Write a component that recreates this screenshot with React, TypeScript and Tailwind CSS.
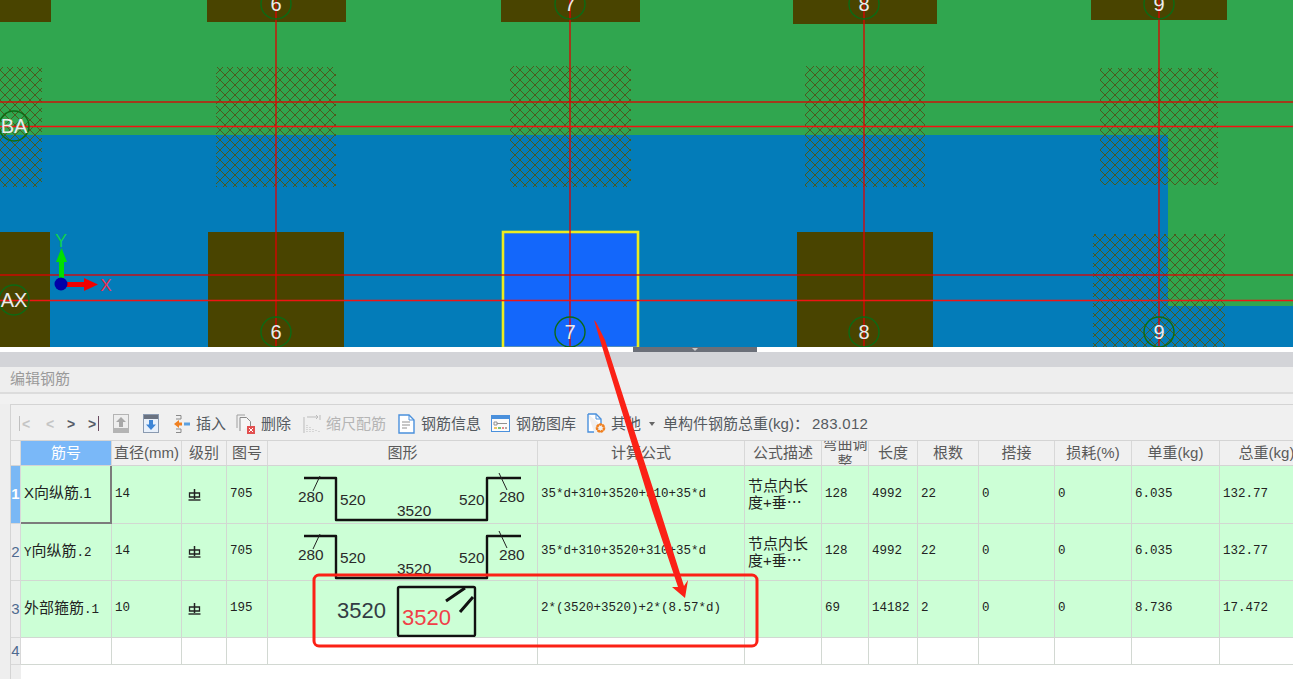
import { ReactNode } from "react";

const CJK = "font-['Liberation_Sans','Noto_Sans_CJK_SC',sans-serif]";
const MONO = "font-['Liberation_Mono','Noto_Sans_CJK_SC',monospace]";

const GRID_COLS =
  "grid grid-cols-[10px_91px_70px_45px_41px_270px_207px_77px_47px_49px_61px_76px_77px_88px_94px]";

const headers = [
  "筋号",
  "直径(mm)",
  "级别",
  "图号",
  "图形",
  "计算公式",
  "公式描述",
  "弯曲调整",
  "长度",
  "根数",
  "搭接",
  "损耗(%)",
  "单重(kg)",
  "总重(kg)",
];

function Hatch({ x, y, w, h }: { x: number; y: number; w: number; h: number }) {
  return <rect x={x} y={y} width={w} height={h} fill="url(#hatch)" />;
}

function AxisBubble({ x, y, label }: { x: number; y: number; label: string }) {
  return (
    <g>
      <circle cx={x} cy={y} r={15} fill="none" stroke="#0c6a14" strokeWidth={1.4} />
      <text
        x={x}
        y={y + 7}
        textAnchor="middle"
        fontSize={20}
        fill="#ececec"
        fontFamily="Liberation Sans, sans-serif"
      >
        {label}
      </text>
    </g>
  );
}

function PlanView() {
  const olive = "#494400";
  return (
    <svg className="block w-full h-[347px]" viewBox="0 0 1293 347">
      <defs>
        <pattern id="hatch" width="10" height="10" patternUnits="userSpaceOnUse">
          <path d="M0 0L10 10M10 0L0 10" stroke="#4c5a1e" strokeWidth="1" fill="none" />
        </pattern>
      </defs>
      <rect width="1293" height="347" fill="#30a64f" />
      <rect y="135" width="1168" height="212" fill="#037cb9" />
      <rect x="1168" y="306" width="125" height="41" fill="#037cb9" />

      <rect x="0" y="0" width="51" height="22" fill={olive} />
      <rect x="207" y="0" width="139" height="22" fill={olive} />
      <rect x="501" y="0" width="139" height="22" fill={olive} />
      <rect x="793" y="0" width="144" height="24" fill={olive} />
      <rect x="1091" y="0" width="136" height="20" fill={olive} />

      <Hatch x={0} y={67} w={42} h={120} />
      <Hatch x={216} y={67} w={120} h={120} />
      <Hatch x={510} y={66} w={121} h={121} />
      <Hatch x={805} y={66} w={120} h={121} />
      <Hatch x={1100} y={68} w={118} h={117} />
      <Hatch x={1093} y={234} w={132} h={113} />

      <rect x="0" y="232" width="50" height="115" fill={olive} />
      <rect x="208" y="232" width="136" height="115" fill={olive} />
      <rect x="797" y="232" width="136" height="115" fill={olive} />
      <rect x="503" y="232" width="135" height="116" fill="#1367fb" stroke="#ecec20" strokeWidth="2.6" />

      <g stroke="#e00000" strokeOpacity="0.65" strokeWidth="2">
        <line x1="276" y1="0" x2="276" y2="347" />
        <line x1="570" y1="0" x2="570" y2="347" />
        <line x1="864" y1="0" x2="864" y2="347" />
        <line x1="1159" y1="0" x2="1159" y2="347" />
        <line x1="0" y1="102" x2="1293" y2="102" />
        <line x1="0" y1="275" x2="1293" y2="275" />
      </g>
      <line x1="0" y1="126.5" x2="1293" y2="126.5" stroke="#f41010" strokeWidth="1.5" />
      <line x1="0" y1="300.5" x2="1293" y2="300.5" stroke="#ee1414" strokeWidth="1.5" />

      <AxisBubble x={276} y={4} label="6" />
      <AxisBubble x={570} y={4} label="7" />
      <AxisBubble x={864} y={4} label="8" />
      <AxisBubble x={1159} y={4} label="9" />
      <AxisBubble x={276} y={332} label="6" />
      <AxisBubble x={570} y={332} label="7" />
      <AxisBubble x={864} y={332} label="8" />
      <AxisBubble x={1159} y={332} label="9" />
      <AxisBubble x={14} y={126} label="BA" />
      <AxisBubble x={14} y={300} label="AX" />

      <rect x="59" y="262" width="5" height="20" fill="#00e000" />
      <path d="M61.5 248L67 262H56Z" fill="#00e000" />
      <rect x="64" y="282" width="21" height="5" fill="#f00000" />
      <path d="M84 278L98 284.5L84 291Z" fill="#f00000" />
      <circle cx="61" cy="284" r="6.5" fill="#0000a8" />
      <text x="61" y="247" textAnchor="middle" fontSize="18" fill="#10d050" fontFamily="Liberation Sans, sans-serif">
        Y
      </text>
      <text x="106" y="291" textAnchor="middle" fontSize="17" fill="#ee3050" fontFamily="Liberation Sans, sans-serif">
        X
      </text>
    </svg>
  );
}

function UpIcon() {
  return (
    <svg width="16" height="19" viewBox="0 0 16 19">
      <rect x="0.5" y="0.5" width="15" height="18" fill="#eeeeee" stroke="#b4b4b4" />
      <rect x="1" y="14" width="14" height="4" fill="#b4b4b4" />
      <path d="M8 3L13 8H10V13H6V8H3Z" fill="#a8a8a8" />
    </svg>
  );
}

function DownIcon() {
  return (
    <svg width="16" height="19" viewBox="0 0 16 19">
      <rect x="0.5" y="0.5" width="15" height="18" fill="#e8f0fa" stroke="#8a9ab0" />
      <rect x="1" y="1" width="14" height="4" fill="#6a7280" />
      <path d="M8 16L13 10.5H10V6H6V10.5H3Z" fill="#3d85d6" />
    </svg>
  );
}

function InsertIcon() {
  return (
    <svg width="18" height="20" viewBox="0 0 18 20" fill="none">
      <path d="M3 1.5H8V5H3M3 15H8V18.5H3" stroke="#8a8a8a" />
      <path d="M1 10L6 6V8.5H9V11.5H6V14Z" fill="#f08020" />
      <rect x="11" y="8.5" width="6" height="3" fill="#5aa0e0" />
    </svg>
  );
}

function DeleteIcon() {
  return (
    <svg width="20" height="20" viewBox="0 0 20 20" fill="none">
      <path d="M1 14V1H9" stroke="#a0a0a0" />
      <path d="M4 17V3.5H10.5L14.5 7.5V12" stroke="#8a8a8a" fill="#f6f6f6" />
      <rect x="11" y="12" width="8" height="8" fill="#e25050" />
      <path d="M13 14L17 18M17 14L13 18" stroke="#fff" />
    </svg>
  );
}

function ShrinkIcon() {
  return (
    <svg width="18" height="20" viewBox="0 0 18 20" fill="none" stroke="#bbbbbb">
      <path d="M1 3V19" />
      <path d="M4 3H14M13 1L15 3L13 5" />
      <path d="M17 1V6" />
      <path d="M4 11V18M7 13V18M10 15V18M13 16V18M16 17V18" strokeDasharray="1 1" />
    </svg>
  );
}

function InfoIcon() {
  return (
    <svg width="17" height="20" viewBox="0 0 17 20" fill="none">
      <path d="M1 1H11L16 6V19H1Z" fill="#fff" stroke="#4a90dc" strokeWidth="1.4" />
      <path d="M11 1V6H16" stroke="#4a90dc" />
      <path d="M4 8H12M4 11H12M4 14H9" stroke="#909090" />
    </svg>
  );
}

function LibraryIcon() {
  return (
    <svg width="19" height="17" viewBox="0 0 19 17" fill="none">
      <rect x="0.5" y="0.5" width="18" height="16" fill="#fbfbfb" stroke="#4a90dc" />
      <rect x="1" y="1" width="17" height="3" fill="#4a90dc" />
      <path d="M3 7H6V10H3ZM6 8.5H16" stroke="#909090" />
      <path d="M3 13H6" stroke="#e8b030" strokeWidth="1.5" />
      <path d="M7 13H10" stroke="#50b050" strokeWidth="1.5" />
      <path d="M11 13H13" stroke="#e06060" strokeWidth="1.5" />
      <path d="M14 13H16" stroke="#909090" strokeWidth="1.5" />
    </svg>
  );
}

function OtherIcon() {
  return (
    <svg width="20" height="21" viewBox="0 0 20 21" fill="none">
      <path d="M1 1H9L14 6V12M7 19H1V1" fill="#fff" stroke="#4a90dc" strokeWidth="1.4" />
      <path d="M9 1V6H14" stroke="#4a90dc" />
      <circle cx="13.5" cy="15" r="3.5" stroke="#f08020" strokeWidth="2.6" strokeDasharray="2.2 0.8" />
      <circle cx="13.5" cy="15" r="3.6" stroke="#f08020" strokeWidth="1.2" />
    </svg>
  );
}

function ToolItem({
  icon,
  label,
  gap,
  muted,
}: {
  icon: ReactNode;
  label: string;
  gap: string;
  muted?: boolean;
}) {
  return (
    <div className={`flex items-center ${gap}`}>
      {icon}
      <span className={muted ? "text-[#b5b5b5]" : "text-[#555a60]"}>{label}</span>
    </div>
  );
}

function Toolbar() {
  return (
    <div className={`flex items-center h-[35px] pt-[2px] text-[15px] leading-none ${CJK}`}>
      <div className="flex items-center w-[102px] pl-[8px] text-[14px] font-bold">
        <span className="w-[1px] h-[15px] bg-[#c0c0c0] mr-[2px]" />
        <span className="w-[24px] text-[#c4c4c4]">&lt;</span>
        <span className="w-[21px] text-[#c4c4c4]">&lt;</span>
        <span className="w-[21px] text-[#555a66]">&gt;</span>
        <span className="w-[10px] text-[#555a66]">&gt;</span>
        <span className="w-[1px] h-[15px] bg-[#6a4a60]" />
      </div>
      <UpIcon />
      <div className="w-[14px]" />
      <DownIcon />
      <div className="w-[14px]" />
      <ToolItem icon={<InsertIcon />} label="插入" gap="gap-[5px]" />
      <div className="w-[10px]" />
      <ToolItem icon={<DeleteIcon />} label="删除" gap="gap-[5px]" />
      <div className="w-[12px]" />
      <ToolItem icon={<ShrinkIcon />} label="缩尺配筋" gap="gap-[5px]" muted />
      <div className="w-[12px]" />
      <ToolItem icon={<InfoIcon />} label="钢筋信息" gap="gap-[6px]" />
      <div className="w-[10px]" />
      <ToolItem icon={<LibraryIcon />} label="钢筋图库" gap="gap-[6px]" />
      <div className="w-[11px]" />
      <ToolItem icon={<OtherIcon />} label="其他" gap="gap-[4px]" />
      <span className="ml-[8px] w-0 h-0 border-x-[3px] border-x-transparent border-t-[4px] border-t-[#666]" />
      <span className="ml-[8px] text-[#555a60] whitespace-nowrap">
        单构件钢筋总重(kg)：<span className="ml-[3px] tracking-[0.3px]">283.012</span>
      </span>
    </div>
  );
}

function BentShape() {
  const font = "Liberation Sans, sans-serif";
  return (
    <svg className="block" width="270" height="56" viewBox="1 0 270 56" overflow="visible">
      <path d="M37 12H69V54H220V12H254" fill="none" stroke="#111" strokeWidth="2.4" strokeLinejoin="round" />
      <path d="M53 10L46 25M232 7L240 24" stroke="#222" fill="none" />
      <g fontSize="15.4" fill="#2a2a2a" fontFamily={font}>
        <text x="31" y="36">280</text>
        <text x="73" y="39">520</text>
        <text x="130" y="50">3520</text>
        <text x="192" y="39">520</text>
        <text x="232" y="36">280</text>
      </g>
    </svg>
  );
}

function HoopShape() {
  const font = "Liberation Sans, sans-serif";
  return (
    <svg className="block" width="270" height="56" viewBox="1 0 270 56">
      <rect x="131" y="6" width="77" height="49" rx="1.5" fill="none" stroke="#111" strokeWidth="2.4" />
      <path d="M179 20L198 7M193 31L206 16" stroke="#111" strokeWidth="3" fill="none" />
      <text x="70" y="37" fontSize="22" fill="#333b44" fontFamily={font}>3520</text>
      <text x="135" y="44" fontSize="22" fill="#f04048" fontFamily={font}>3520</text>
    </svg>
  );
}

function GradeMark() {
  return (
    <svg width="13" height="13" viewBox="0 0 13 13" fill="none" stroke="#222" role="img" aria-label="钢筋级别">
      <path d="M6.5 1V11" strokeWidth="1.5" />
      <path d="M1.5 9V5H11.5V9H1.5Z" strokeWidth="1.3" />
      <path d="M0.5 12H12.5" strokeWidth="1.4" />
    </svg>
  );
}

function Cell({
  children,
  selected,
  green = true,
}: {
  children?: ReactNode;
  selected?: boolean;
  green?: boolean;
}) {
  return (
    <div
      className={`flex items-center min-w-0 pl-[3px] pb-[1px] overflow-hidden whitespace-nowrap ${
        green ? "bg-[#ccffd6]" : "bg-white"
      } ${
        selected
          ? "border-r-2 border-b-2 border-r-[#7c7c7c] border-b-[#7c7c7c]"
          : "border-r border-b border-[#d2d8d2]"
      }`}
    >
      {children}
    </div>
  );
}

function RowNo({ n, active }: { n: number; active?: boolean }) {
  return (
    <div
      className={`flex items-center justify-center text-[15px] border-r border-b border-[#d8d8d8] ${CJK} ${
        active ? "bg-[#7ab8f5] text-white font-bold" : "bg-[#eeeeee] text-[#4f6a90]"
      }`}
    >
      {n}
    </div>
  );
}

const rows = [
  {
    h: "h-[58px]",
    name: (
      <span className={`text-[15px] text-[#222] ${CJK}`}>X向纵筋.1</span>
    ),
    dia: "14",
    fig: "705",
    shape: <BentShape />,
    formula: "35*d+310+3520+310+35*d",
    desc: true,
    bend: "128",
    len: "4992",
    num: "22",
    unit: "6.035",
    total: "132.77",
  },
  {
    h: "h-[57px]",
    name: (
      <span>
        Y<span className={`text-[15px] ${CJK}`}>向纵筋</span>.2
      </span>
    ),
    dia: "14",
    fig: "705",
    shape: <BentShape />,
    formula: "35*d+310+3520+310+35*d",
    desc: true,
    bend: "128",
    len: "4992",
    num: "22",
    unit: "6.035",
    total: "132.77",
  },
  {
    h: "h-[57px]",
    name: (
      <span>
        <span className={`text-[15px] ${CJK}`}>外部箍筋</span>.1
      </span>
    ),
    dia: "10",
    fig: "195",
    shape: <HoopShape />,
    formula: "2*(3520+3520)+2*(8.57*d)",
    desc: false,
    bend: "69",
    len: "14182",
    num: "2",
    unit: "8.736",
    total: "17.472",
  },
];

function RebarTable() {
  return (
    <div className={`text-[12.5px] text-[#222] ${MONO}`}>
      <div className={`${GRID_COLS} h-[26px] border-y border-[#d4d4d4]`}>
        <div className="bg-[#f0f0f0] border-r border-[#d8d8d8]" />
        {headers.map((title, i) => (
          <div
            key={title}
            className={`flex items-center justify-center overflow-hidden border-r border-[#d8d8d8] text-[15px] leading-[18px] text-center ${CJK} ${
              i === 0 ? "bg-[#7ab8f8] text-white" : "bg-[#f0f0f0] text-[#5a5a5a]"
            } ${title === "弯曲调整" ? "whitespace-normal" : "whitespace-nowrap"}`}
          >
            {title}
          </div>
        ))}
      </div>
      {rows.map((row, i) => (
        <div key={i} className={`${GRID_COLS} ${row.h}`}>
          <RowNo n={i + 1} active={i === 0} />
          <Cell selected={i === 0}>{row.name}</Cell>
          <Cell>{row.dia}</Cell>
          <Cell>
            <span className="ml-[3px]">
              <GradeMark />
            </span>
          </Cell>
          <Cell>{row.fig}</Cell>
          <div className="border-r border-b border-[#d2d8d2] bg-[#ccffd6]">{row.shape}</div>
          <Cell>{row.formula}</Cell>
          <Cell>
            {row.desc && (
              <span className={`text-[15px] leading-[17px] ${CJK}`}>
                节点内长
                <br />
                度+垂⋯
              </span>
            )}
          </Cell>
          <Cell>{row.bend}</Cell>
          <Cell>{row.len}</Cell>
          <Cell>{row.num}</Cell>
          <Cell>0</Cell>
          <Cell>0</Cell>
          <Cell>{row.unit}</Cell>
          <Cell>{row.total}</Cell>
        </div>
      ))}
      <div className={`${GRID_COLS} h-[27px]`}>
        <RowNo n={4} />
        {headers.map((title) => (
          <Cell key={title} green={false} />
        ))}
      </div>
    </div>
  );
}

function Annotations() {
  return (
    <svg className="absolute inset-0 pointer-events-none" width="1293" height="679" viewBox="0 0 1293 679">
      <rect x="314" y="575" width="443" height="71" rx="5" fill="none" stroke="#fb2116" strokeWidth="3" />
      <path
        d="M594 320L596 322L605 340L660 510L684 586L688 580L685 598L672 587L678 587L652 510L600 340Z"
        fill="#fb2116"
      />
    </svg>
  );
}

export default function App() {
  return (
    <div className="relative w-full h-[679px] overflow-hidden bg-[#eeeeee]">
      <PlanView />
      <div className="h-[5px] bg-white">
        <div className="ml-[633px] w-[124px] h-[5px] bg-[#6b6f78] flex justify-center">
          <span className="w-0 h-0 border-x-[3px] border-x-transparent border-t-[3px] border-t-[#c8c8c8] mt-[1px]" />
        </div>
      </div>
      <div className="h-[15px] bg-[#d3d4d8]" />
      <div
        className={`h-[27px] flex items-center pl-[10px] border-b-2 border-[#dcdcdc] text-[15px] text-[#9a9a9a] ${CJK}`}
      >
        编辑钢筋
      </div>
      <div className="h-[10px] bg-[#f1f1f1]" />
      <div className="ml-[10px] border-l border-t border-[#d4d4d4] h-[275px] bg-white overflow-hidden">
        <div className="bg-[#f0f0f0]">
          <Toolbar />
        </div>
        <RebarTable />
        <div className="w-[10px] h-[20px] bg-[#eeeeee]" />
      </div>
      <Annotations />
    </div>
  );
}
